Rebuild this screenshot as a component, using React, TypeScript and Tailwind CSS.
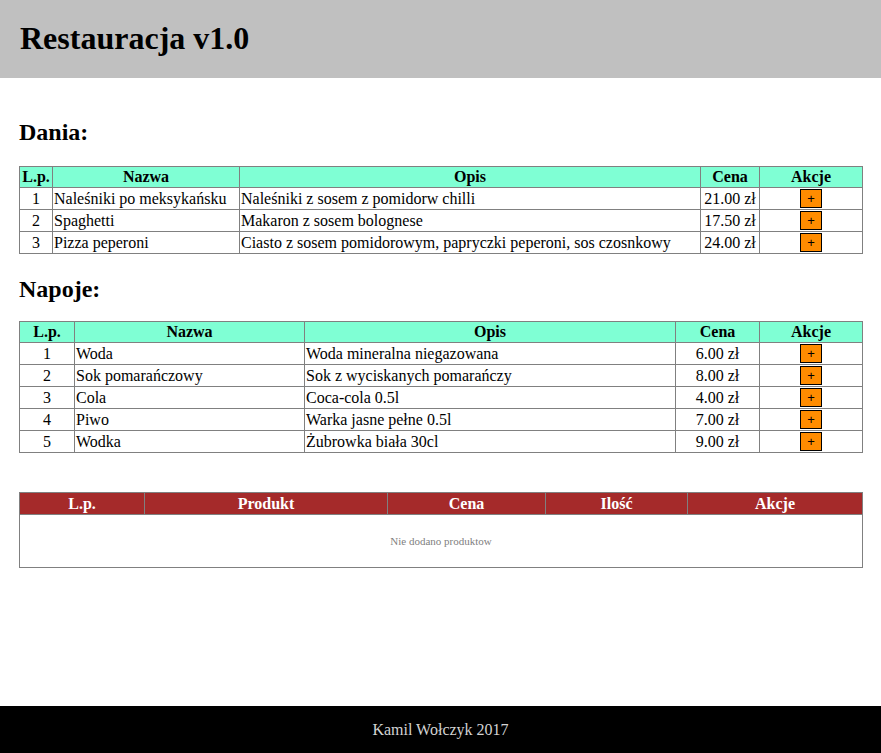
import React from 'react';

type Item = { name: string; desc: string; price: string };

const dania: Item[] = [
  { name: 'Naleśniki po meksykańsku', desc: 'Naleśniki z sosem z pomidorw chilli', price: '21.00 zł' },
  { name: 'Spaghetti', desc: 'Makaron z sosem bolognese', price: '17.50 zł' },
  { name: 'Pizza peperoni', desc: 'Ciasto z sosem pomidorowym, papryczki peperoni, sos czosnkowy', price: '24.00 zł' },
];

const napoje: Item[] = [
  { name: 'Woda', desc: 'Woda mineralna niegazowana', price: '6.00 zł' },
  { name: 'Sok pomarańczowy', desc: 'Sok z wyciskanych pomarańczy', price: '8.00 zł' },
  { name: 'Cola', desc: 'Coca-cola 0.5l', price: '4.00 zł' },
  { name: 'Piwo', desc: 'Warka jasne pełne 0.5l', price: '7.00 zł' },
  { name: 'Wodka', desc: 'Żubrowka biała 30cl', price: '9.00 zł' },
];

const th = 'border border-[#808080] px-[1px] py-[1px] font-bold text-center';
const td = 'border border-[#808080] px-[1px] py-[1px]';

function AddButton() {
  return (
    <button className="block mx-auto bg-[#ff8c00] border border-black px-[6px] py-[1px] text-[13px] leading-[15px] text-black font-['Liberation_Sans',Arial,sans-serif]">
      +
    </button>
  );
}

function MenuTable({ items, widths }: { items: Item[]; widths: string[] }) {
  return (
    <table className="w-full table-fixed border-collapse border border-[#808080] leading-[18px]">
      <thead>
        <tr className="bg-[#7fffd4]">
          <th className={`${th} ${widths[0]}`}>L.p.</th>
          <th className={`${th} ${widths[1]}`}>Nazwa</th>
          <th className={`${th} ${widths[2]}`}>Opis</th>
          <th className={`${th} ${widths[3]}`}>Cena</th>
          <th className={`${th} ${widths[4]}`}>Akcje</th>
        </tr>
      </thead>
      <tbody>
        {items.map((item, i) => (
          <tr key={item.name}>
            <td className={`${td} text-center`}>{i + 1}</td>
            <td className={`${td} whitespace-nowrap`}>{item.name}</td>
            <td className={`${td} whitespace-nowrap`}>{item.desc}</td>
            <td className={`${td} text-center whitespace-nowrap`}>{item.price}</td>
            <td className={`${td} text-center`}>
              <AddButton />
            </td>
          </tr>
        ))}
      </tbody>
    </table>
  );
}

export default function App() {
  return (
    <div className="min-h-screen flex flex-col bg-white text-black font-['Liberation_Serif','Times_New_Roman',serif] text-[16px]">
      <header className="bg-[#c0c0c0] h-[78px] pt-[20px] px-[20px]">
        <h1 className="text-[32px] font-bold leading-[37px]">Restauracja v1.0</h1>
      </header>

      <main className="px-[19px] pt-[40px]">
        <h2 className="text-[24px] font-bold leading-[28px] mb-[20px]">Dania:</h2>
        <MenuTable items={dania} widths={['w-[33px]', 'w-[187px]', 'w-[461px]', 'w-[59px]', 'w-[103px]']} />

        <h2 className="text-[24px] font-bold leading-[28px] mt-[21px] mb-[18px]">Napoje:</h2>
        <MenuTable items={napoje} widths={['w-[55px]', 'w-[230px]', 'w-[371px]', 'w-[84px]', 'w-[103px]']} />

        <table className="w-full table-fixed border-collapse border border-[#808080] mt-[39px] leading-[19px]">
          <thead>
            <tr className="bg-[#a52a2a] text-white">
              <th className={`${th} w-[125px]`}>L.p.</th>
              <th className={`${th} w-[243px]`}>Produkt</th>
              <th className={`${th} w-[158px]`}>Cena</th>
              <th className={`${th} w-[142px]`}>Ilość</th>
              <th className={`${th} w-[175px]`}>Akcje</th>
            </tr>
          </thead>
          <tbody>
            <tr>
              <td colSpan={5} className="border border-[#808080] h-[53px] text-center text-[11px] text-[#808080]">
                Nie dodano produktow
              </td>
            </tr>
          </tbody>
        </table>
      </main>

      <footer className="mt-auto bg-black h-[47px] flex items-center justify-center text-[#d3d3d3] text-[16px]">
        Kamil Wołczyk 2017
      </footer>
    </div>
  );
}
